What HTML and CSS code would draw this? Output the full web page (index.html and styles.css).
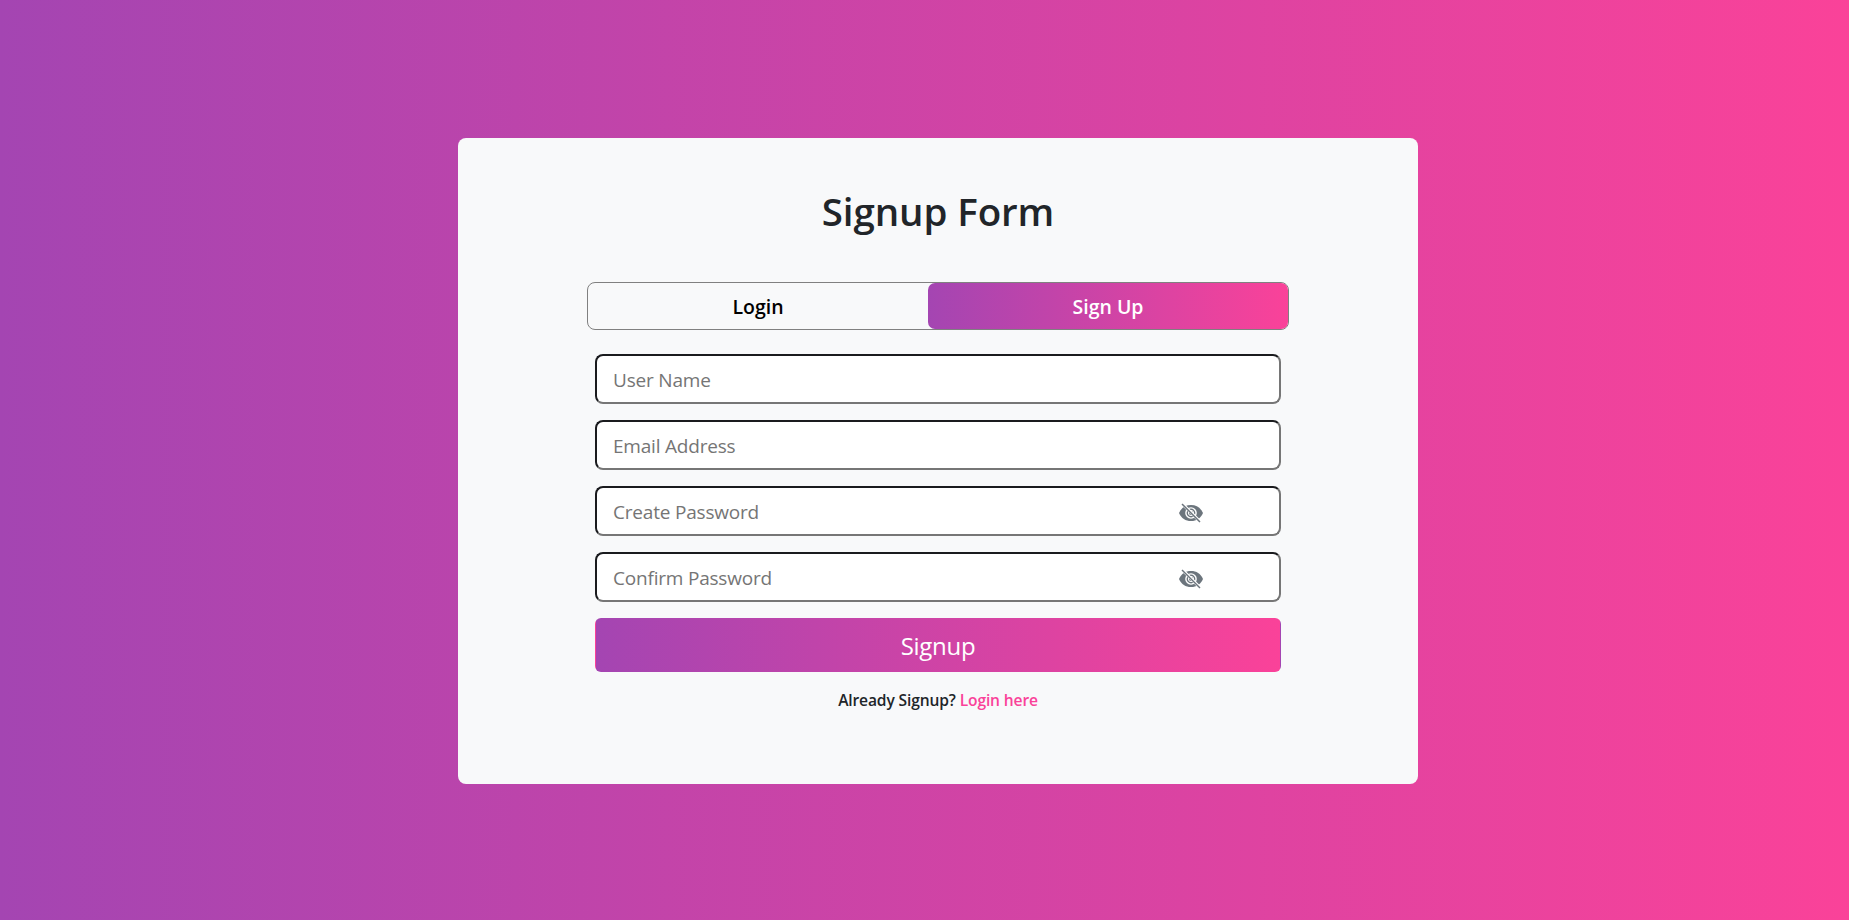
FILE: index.html
```html
<!DOCTYPE html>
<html lang="en">
<head>
<meta charset="utf-8">
<title>Signup Form</title>
<link rel="stylesheet" href="styles.css">
</head>
<body>
<main class="card">
  <h1 class="title">Signup Form</h1>
  <nav class="tabs">
    <a class="tab tab-login">Login</a>
    <a class="tab tab-signup">Sign Up</a>
  </nav>
  <form class="form">
    <div class="field"><span class="hint">User Name</span></div>
    <div class="field"><span class="hint">Email Address</span></div>
    <div class="field"><span class="hint">Create Password</span>
      <svg class="eye" viewBox="0 0 24 20"><path class="lid" d="M0 10C2.500 4.500 6.500 2 12 2s9.500 2.500 12 8c-2.500 5.500-6.500 8-12 8S2.500 15.500 0 10z"/><circle class="gap" cx="12" cy="10" r="5.800"/><circle class="iris" cx="12" cy="10" r="4.400"/><circle class="ring" cx="12" cy="10" r="2.600"/><path class="cut" d="M2.500 0l20 20"/><path class="slash" d="M3 1l18 18"/></svg>
    </div>
    <div class="field"><span class="hint">Confirm Password</span>
      <svg class="eye" viewBox="0 0 24 20"><path class="lid" d="M0 10C2.500 4.500 6.500 2 12 2s9.500 2.500 12 8c-2.500 5.500-6.500 8-12 8S2.500 15.500 0 10z"/><circle class="gap" cx="12" cy="10" r="5.800"/><circle class="iris" cx="12" cy="10" r="4.400"/><circle class="ring" cx="12" cy="10" r="2.600"/><path class="cut" d="M2.500 0l20 20"/><path class="slash" d="M3 1l18 18"/></svg>
    </div>
    <button class="submit" type="button">Signup</button>
  </form>
  <p class="foot">Already Signup? <a class="link">Login here</a></p>
</main>
</body>
</html>
```

FILE: styles.css
```css
* { box-sizing: border-box; }
body {
  margin: 0;
  height: 920px;
  padding: 138px 0 0 458px;
  overflow: hidden;
  font-family: "Open Sans", "Noto Sans", sans-serif;
  color: #212529;
  background: linear-gradient(to right, #a445b2, #fa4299);
}
.card {
  width: 960px;
  height: 646px;
  padding: 49px 129px 0;
  background: #f8f9fa;
  border-radius: 8px;
}
.title {
  margin: 0 0 47px;
  font-size: 38.5px;
  font-weight: 600;
  line-height: 48px;
  letter-spacing: -0.1px;
  text-align: center;
}
.tabs {
  display: flex;
  height: 48px;
  border: 1px solid #808080;
  border-radius: 8px;
}
.tab {
  display: flex;
  justify-content: center;
  align-items: center;
  font-size: 19.5px;
  font-weight: 600;
  color: #000;
}
.tab-login { width: 340px; }
.tab-signup {
  width: 360px;
  color: #fff;
  border-radius: 7px;
  background: linear-gradient(to right, #a445b2, #fa4299);
}
.form {
  display: flex;
  flex-direction: column;
  gap: 16px;
  padding: 24px 8px 0;
}
.field {
  display: flex;
  align-items: center;
  justify-content: space-between;
  height: 50px;
  padding: 0 76px 0 16px;
  border: 2px solid;
  border-color: #1a1b1e #767676 #767676 #1a1b1e;
  border-radius: 8px;
  background: #fff;
  font-size: 19px;
  letter-spacing: -0.2px;
  color: #757575;
}
.hint { padding-top: 2px; }
.eye {
  width: 24px;
  height: 20px;
  margin-top: 3px;
}
.lid, .iris { fill: #6c757d; }
.gap { fill: #fff; }
.ring { fill: none; stroke: #fff; stroke-width: 1; }
.cut { stroke: #fff; stroke-width: 3; }
.slash { stroke: #6c757d; stroke-width: 1.5; }
.submit {
  height: 54px;
  padding: 0;
  border: 1px solid transparent;
  border-radius: 6px;
  background: linear-gradient(to right, #a445b2, #fa4299);
  color: #fff;
  font: 400 24px "Open Sans", "Noto Sans", sans-serif;
  letter-spacing: -0.3px;
}
.foot {
  margin: 16px 0 0;
  font-size: 15.6px;
  font-weight: 600;
  line-height: 24px;
  letter-spacing: -0.14px;
  text-align: center;
}
.link { color: #fa4299; }
```
